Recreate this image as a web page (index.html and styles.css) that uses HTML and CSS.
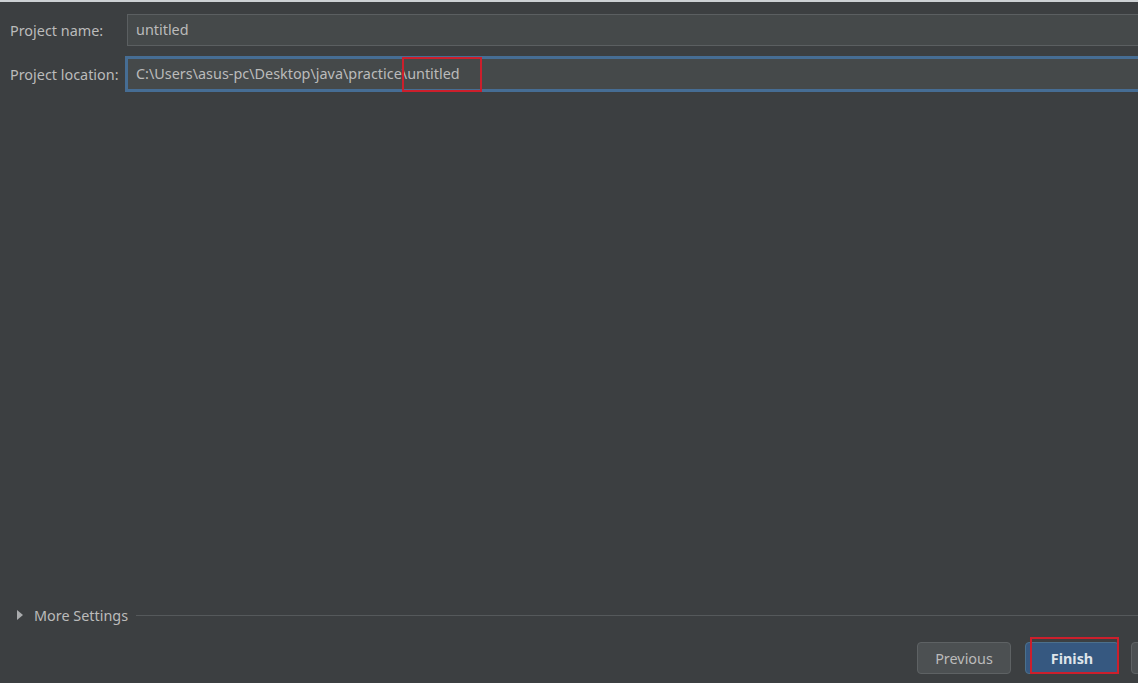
FILE: index.html
```html
<!DOCTYPE html>
<html>
<head>
<meta charset="utf-8">
<link rel="stylesheet" href="styles.css">
</head>
<body>
<div class="window">
  <div class="topline"></div>
  <div class="form">
    <div class="row">
      <label class="label">Project name:</label>
      <div class="field">untitled</div>
    </div>
    <div class="row">
      <label class="label">Project location:</label>
      <div class="field focused">C:\Users\asus-pc\Desktop\java\practice<span class="mark">\untitled<span class="redbox redbox-path"></span></span></div>
    </div>
  </div>
  <div class="spacer"></div>
  <div class="more">
    <svg class="tri" width="6" height="10" viewBox="0 0 6 10"><path d="M0 0 L6 5 L0 10 Z" fill="#a9abad"/></svg>
    <span class="more-text">More Settings</span>
    <div class="sep"></div>
  </div>
  <div class="buttons">
    <button class="btn prev">Previous</button>
    <button class="btn primary">Finish<span class="redbox redbox-btn"></span></button>
    <button class="btn"></button>
  </div>
</div>
</body>
</html>
```

FILE: styles.css
```css
html, body {
  margin: 0;
  padding: 0;
  background: #3c3f41;
  overflow: hidden;
}
body {
  font-family: "Noto Sans", "Open Sans", sans-serif;
  font-size: 14.4px;
  color: #bbbbbb;
}
.window {
  width: 1138px;
  height: 683px;
  display: flex;
  flex-direction: column;
  overflow: hidden;
}
.topline {
  height: 2px;
  background: #cdd1d4;
  flex: none;
}
.form {
  display: flex;
  flex-direction: column;
  gap: 12px;
  padding-top: 12px;
}
.row {
  display: flex;
  align-items: center;
  padding-left: 10px;
}
.label {
  width: 117px;
  flex: none;
  color: #bbbbbb;
  white-space: nowrap;
}
.field {
  flex: 1;
  margin-right: -40px;
  height: 30px;
  box-sizing: content-box;
  border: 1px solid #5b5f61;
  background: #45494a;
  padding-left: 8px;
  line-height: 30px;
  color: #bbbbbb;
  white-space: nowrap;
}
.field.focused {
  border-color: #466d94;
  box-shadow: 0 0 0 2px #466d94;
}
.mark {
  position: relative;
}
.redbox {
  position: absolute;
  border: 2px solid #cc1f2c;
  pointer-events: none;
  box-sizing: border-box;
}
.redbox-path {
  left: 0;
  top: -7px;
  width: 80px;
  height: 35px;
}
.spacer {
  flex: 1;
}
.more {
  display: flex;
  align-items: center;
  height: 20px;
  padding-left: 17px;
}
.tri {
  flex: none;
  margin-right: 11px;
}
.more-text {
  color: #bbbbbb;
  white-space: nowrap;
}
.sep {
  flex: 1;
  height: 1px;
  background: #55595b;
  margin-left: 8px;
}
.buttons {
  display: flex;
  justify-content: flex-end;
  gap: 12px;
  margin-top: 17px;
  margin-bottom: 9px;
  margin-right: -87px;
}
.btn {
  position: relative;
  width: 94px;
  height: 32px;
  border-radius: 4px;
  border: 1px solid #5e6264;
  background: #4c5052;
  color: #bbbbbb;
  font-family: "Noto Sans", "Open Sans", sans-serif;
  font-size: 14.4px;
  padding: 0;
  flex: none;
}
.btn.prev {
  margin-right: 2px;
}
.btn.primary {
  background: #365880;
  border-color: #4c708c;
  color: #dfe4ea;
  font-weight: bold;
}
.redbox-btn {
  left: 4px;
  top: -6px;
  width: 89px;
  height: 37px;
}
```
